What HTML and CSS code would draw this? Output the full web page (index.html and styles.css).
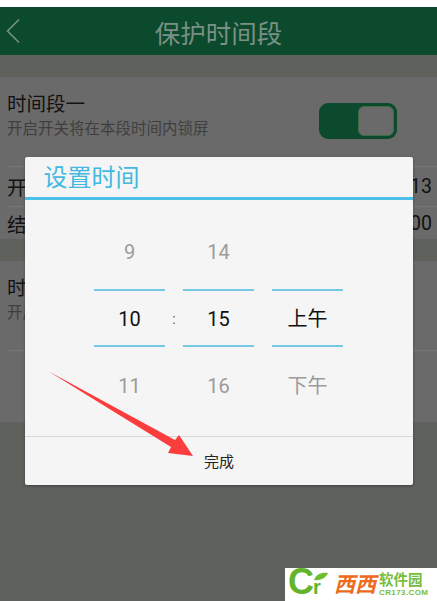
FILE: index.html
```html
<!DOCTYPE html>
<html lang="zh-CN">
<head>
    <meta charset="UTF-8">
    <meta name="viewport" content="width=device-width, initial-scale=1.0">
    <title>保护时间段</title>
    <link rel="stylesheet" href="styles.css">
</head>
<body>
    <div class="page">
        <header class="top-bar">
            <svg class="back-icon" width="14" height="26" viewBox="0 0 14 26">
                <path d="M13 1.5 L1.5 13 L13 24.5" fill="none" stroke="#7a9085" stroke-width="1.6"/>
            </svg>
            <h1>保护时间段</h1>
        </header>

        <section class="period">
            <div class="period-head">
                <div>
                    <div class="period-name">时间段一</div>
                    <div class="period-note">开启开关将在本段时间内锁屏</div>
                </div>
                <div class="toggle"><span class="toggle-knob"></span></div>
            </div>
            <div class="time-row"><span>开始时间</span><span class="time-value">08:13</span></div>
            <div class="time-row time-row-last"><span>结束时间</span><span class="time-value">10:00</span></div>
        </section>

        <section class="period period-second">
            <div class="period-head">
                <div>
                    <div class="period-name">时间段二</div>
                    <div class="period-note">开启开关将在本段时间内锁屏</div>
                </div>
            </div>
        </section>
    </div>

    <div class="dialog">
        <h2 class="dialog-title">设置时间</h2>
        <div class="picker">
            <div class="wheel">
                <div class="wheel-item">9</div>
                <div class="wheel-item wheel-current">10</div>
                <div class="wheel-item">11</div>
            </div>
            <div class="wheel-sep">:</div>
            <div class="wheel">
                <div class="wheel-item">14</div>
                <div class="wheel-item wheel-current">15</div>
                <div class="wheel-item">16</div>
            </div>
            <div class="wheel wheel-ampm">
                <div class="wheel-item"></div>
                <div class="wheel-item wheel-current">上午</div>
                <div class="wheel-item">下午</div>
            </div>
        </div>
        <div class="dialog-done">完成</div>
    </div>

    <!-- red arrow drawn over the screenshot -->
    <svg class="arrow" width="437" height="601" viewBox="0 0 437 601">
        <polygon points="48,371 175,440 179,435 193,456 168,453 171,447" fill="#fb3d3d"/>
    </svg>

    <div class="watermark">
        <span class="wm-mark">C<span class="wm-mark-r">r</span></span>
        <svg class="wm-leaf" width="14" height="9" viewBox="0 0 14 9">
            <path d="M0 8 C2 2 8 0 14 1 C12 6 6 9 0 8 Z" fill="#6fbe2e"/>
        </svg>
        <span class="wm-name">西西</span>
        <span class="wm-right">
            <span class="wm-soft">软件园</span>
            <span class="wm-url">CR173.COM</span>
        </span>
    </div>
</body>
</html>
```

FILE: styles.css
```css
* {
    box-sizing: border-box;
}

html, body {
    margin: 0;
    height: 100%;
}

body {
    font-family: Roboto, "Noto Sans CJK SC", sans-serif;
    background-color: #5f615d;
    color: #111;
    overflow: hidden;
    position: relative;
}

.page {
    padding-top: 7px;
    background: linear-gradient(#fff 7px, #5f615d 7px);
}

.top-bar {
    height: 48px;
    background-color: #0b4a2c;
    position: relative;
    display: flex;
    align-items: center;
    justify-content: center;
}

.top-bar h1 {
    margin: 0;
    font-size: 25.5px;
    font-weight: 400;
    color: #7a9085;
}

.back-icon {
    position: absolute;
    left: 6px;
    top: 11px;
}

.period {
    margin-top: 22px;
    height: 162px;
    padding-left: 7px;
    background-color: #6a6a6a;
}

.period-second {
    height: 161px;
}

.period-head {
    height: 90px;
    padding-right: 40px;
    padding-top: 14px;
    display: flex;
    justify-content: space-between;
    border-bottom: 1px solid #777;
}

.period-name {
    font-size: 19.5px;
    line-height: 27px;
}

.period-note {
    font-size: 15.5px;
    line-height: 22px;
    color: #3f3f3f;
}

.toggle {
    width: 78px;
    height: 36px;
    margin-top: 12px;
    padding: 3px;
    border-radius: 9px;
    background-color: #0b4a2c;
    display: flex;
    justify-content: flex-end;
}

.toggle-knob {
    width: 36px;
    height: 30px;
    border-radius: 6px;
    background-color: #6a6a6a;
    border: 1px solid #3f6b45;
}

.time-row {
    height: 40px;
    padding-right: 5px;
    display: flex;
    justify-content: space-between;
    align-items: center;
    font-size: 19.5px;
    border-bottom: 1px solid #777;
}

.time-row-last {
    height: 32px;
    border-bottom: none;
}

.dialog {
    position: absolute;
    left: 25px;
    top: 157px;
    width: 388px;
    height: 328px;
    background-color: #f5f5f5;
    border-radius: 2px;
    box-shadow: 0 1px 3px rgba(0, 0, 0, 0.35);
    display: flex;
    flex-direction: column;
}

.dialog-title {
    margin: 0;
    height: 43px;
    padding: 2px 0 0 18.5px;
    font-size: 24px;
    font-weight: 400;
    line-height: 38px;
    color: #43b8e2;
    border-bottom: 3px solid #4cc0e8;
}

.picker {
    height: 236px;
    flex: none;
    padding-left: 69px;
    display: flex;
}

.wheel {
    width: 71px;
    padding-top: 19px;
}

.wheel-ampm {
    margin-left: 18px;
}

.wheel-sep {
    width: 18px;
    padding-top: 107px;
    font-size: 14px;
    line-height: 24px;
    text-align: center;
    color: #555;
}

.wheel-item {
    height: 66px;
    line-height: 66px;
    text-align: center;
    font-size: 20px;
    color: #9b9b9b;
}

.wheel-current {
    height: 58px;
    line-height: 56px;
    color: #111;
    border-top: 2px solid #74c8e2;
    border-bottom: 2px solid #74c8e2;
    margin-top: 4px;
    margin-bottom: 6px;
}

.dialog-done {
    flex: 1;
    border-top: 1px solid #d8d8d8;
    font-size: 15px;
    line-height: 50px;
    text-align: center;
    color: #222;
}

.arrow {
    position: absolute;
    left: 0;
    top: 0;
}

.watermark {
    position: absolute;
    left: 285px;
    top: 568px;
    width: 152px;
    height: 33px;
    padding-left: 3px;
    background-color: #fff;
    display: flex;
    align-items: center;
}

.wm-mark {
    width: 44px;
    font-family: "Liberation Sans", sans-serif;
    font-size: 36px;
    font-weight: 700;
    line-height: 33px;
    letter-spacing: -1px;
    color: #62b42a;
}

.wm-mark-r {
    font-size: 20px;
}

.wm-leaf {
    position: absolute;
    left: 29px;
    top: 4px;
}

.wm-name {
    margin-left: 2px;
    font-size: 21px;
    font-weight: 700;
    font-style: italic;
    line-height: 26px;
    color: #ee6a1c;
}

.wm-right {
    margin-left: 3px;
    display: flex;
    flex-direction: column;
}

.wm-soft {
    font-size: 14.5px;
    font-weight: 700;
    line-height: 15px;
    color: #78bd3c;
}

.wm-url {
    font-family: "Liberation Sans", sans-serif;
    font-size: 8px;
    font-weight: 700;
    line-height: 9px;
    letter-spacing: 0.4px;
    color: #78bd3c;
}
```
